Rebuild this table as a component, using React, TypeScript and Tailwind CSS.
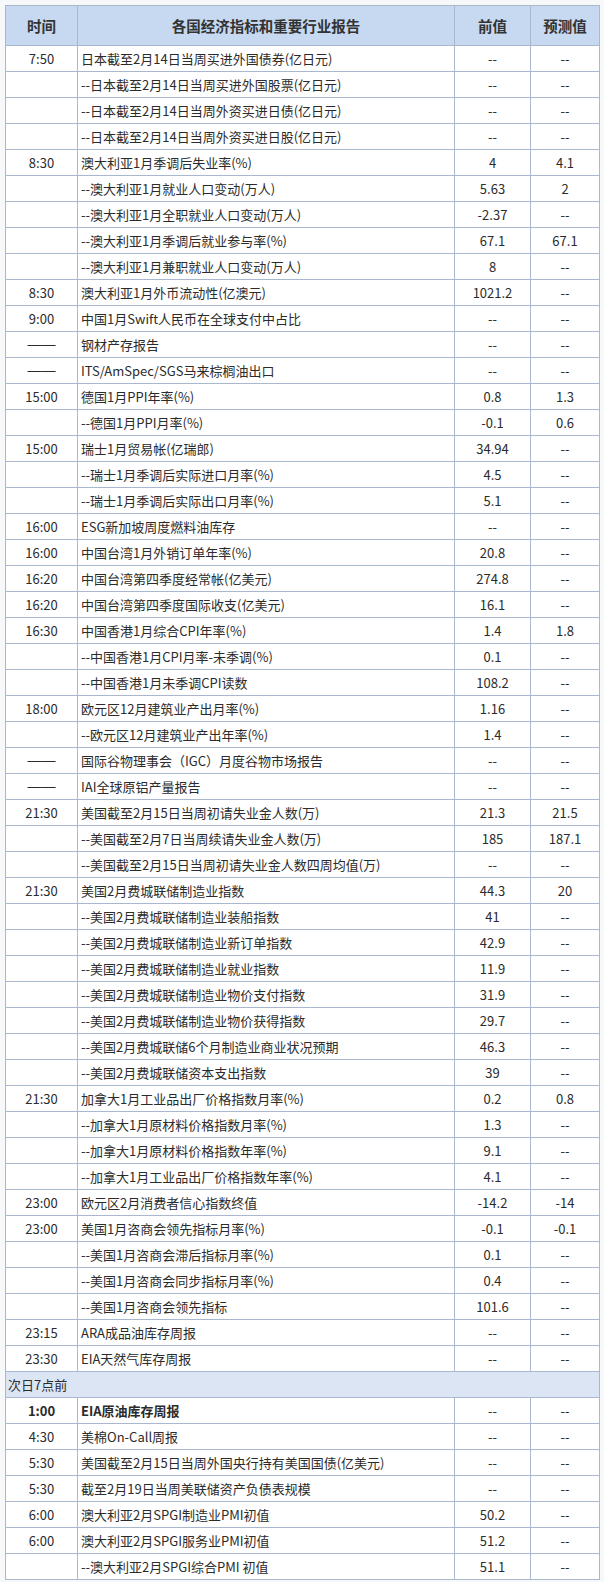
import React from "react";

type Row = { t?: string; n: string; p?: string; f?: string; bold?: boolean; section?: boolean };

const rows: Row[] = [
  { t: "7:50", n: "日本截至2月14日当周买进外国债券(亿日元)" },
  { n: "--日本截至2月14日当周买进外国股票(亿日元)" },
  { n: "--日本截至2月14日当周外资买进日债(亿日元)" },
  { n: "--日本截至2月14日当周外资买进日股(亿日元)" },
  { t: "8:30", n: "澳大利亚1月季调后失业率(%)", p: "4", f: "4.1" },
  { n: "--澳大利亚1月就业人口变动(万人)", p: "5.63", f: "2" },
  { n: "--澳大利亚1月全职就业人口变动(万人)", p: "-2.37" },
  { n: "--澳大利亚1月季调后就业参与率(%)", p: "67.1", f: "67.1" },
  { n: "--澳大利亚1月兼职就业人口变动(万人)", p: "8" },
  { t: "8:30", n: "澳大利亚1月外币流动性(亿澳元)", p: "1021.2" },
  { t: "9:00", n: "中国1月Swift人民币在全球支付中占比" },
  { t: "——", n: "钢材产存报告" },
  { t: "——", n: "ITS/AmSpec/SGS马来棕榈油出口" },
  { t: "15:00", n: "德国1月PPI年率(%)", p: "0.8", f: "1.3" },
  { n: "--德国1月PPI月率(%)", p: "-0.1", f: "0.6" },
  { t: "15:00", n: "瑞士1月贸易帐(亿瑞郎)", p: "34.94" },
  { n: "--瑞士1月季调后实际进口月率(%)", p: "4.5" },
  { n: "--瑞士1月季调后实际出口月率(%)", p: "5.1" },
  { t: "16:00", n: "ESG新加坡周度燃料油库存" },
  { t: "16:00", n: "中国台湾1月外销订单年率(%)", p: "20.8" },
  { t: "16:20", n: "中国台湾第四季度经常帐(亿美元)", p: "274.8" },
  { t: "16:20", n: "中国台湾第四季度国际收支(亿美元)", p: "16.1" },
  { t: "16:30", n: "中国香港1月综合CPI年率(%)", p: "1.4", f: "1.8" },
  { n: "--中国香港1月CPI月率-未季调(%)", p: "0.1" },
  { n: "--中国香港1月未季调CPI读数", p: "108.2" },
  { t: "18:00", n: "欧元区12月建筑业产出月率(%)", p: "1.16" },
  { n: "--欧元区12月建筑业产出年率(%)", p: "1.4" },
  { t: "——", n: "国际谷物理事会（IGC）月度谷物市场报告" },
  { t: "——", n: "IAI全球原铝产量报告" },
  { t: "21:30", n: "美国截至2月15日当周初请失业金人数(万)", p: "21.3", f: "21.5" },
  { n: "--美国截至2月7日当周续请失业金人数(万)", p: "185", f: "187.1" },
  { n: "--美国截至2月15日当周初请失业金人数四周均值(万)" },
  { t: "21:30", n: "美国2月费城联储制造业指数", p: "44.3", f: "20" },
  { n: "--美国2月费城联储制造业装船指数", p: "41" },
  { n: "--美国2月费城联储制造业新订单指数", p: "42.9" },
  { n: "--美国2月费城联储制造业就业指数", p: "11.9" },
  { n: "--美国2月费城联储制造业物价支付指数", p: "31.9" },
  { n: "--美国2月费城联储制造业物价获得指数", p: "29.7" },
  { n: "--美国2月费城联储6个月制造业商业状况预期", p: "46.3" },
  { n: "--美国2月费城联储资本支出指数", p: "39" },
  { t: "21:30", n: "加拿大1月工业品出厂价格指数月率(%)", p: "0.2", f: "0.8" },
  { n: "--加拿大1月原材料价格指数月率(%)", p: "1.3" },
  { n: "--加拿大1月原材料价格指数年率(%)", p: "9.1" },
  { n: "--加拿大1月工业品出厂价格指数年率(%)", p: "4.1" },
  { t: "23:00", n: "欧元区2月消费者信心指数终值", p: "-14.2", f: "-14" },
  { t: "23:00", n: "美国1月咨商会领先指标月率(%)", p: "-0.1", f: "-0.1" },
  { n: "--美国1月咨商会滞后指标月率(%)", p: "0.1" },
  { n: "--美国1月咨商会同步指标月率(%)", p: "0.4" },
  { n: "--美国1月咨商会领先指标", p: "101.6" },
  { t: "23:15", n: "ARA成品油库存周报" },
  { t: "23:30", n: "EIA天然气库存周报" },
  { n: "次日7点前", section: true },
  { t: "1:00", n: "EIA原油库存周报", bold: true },
  { t: "4:30", n: "美棉On-Call周报" },
  { t: "5:30", n: "美国截至2月15日当周外国央行持有美国国债(亿美元)" },
  { t: "5:30", n: "截至2月19日当周美联储资产负债表规模" },
  { t: "6:00", n: "澳大利亚2月SPGI制造业PMI初值", p: "50.2" },
  { t: "6:00", n: "澳大利亚2月SPGI服务业PMI初值", p: "51.2" },
  { n: "--澳大利亚2月SPGI综合PMI 初值", p: "51.1" },
];

const font = { fontFamily: '"Noto Sans CJK SC", "Noto Sans", sans-serif' };

export default function App() {
  return (
    <div className="min-h-[1582px] w-[604px] bg-[#f7f8fa] pt-[5px] pl-[5px]" style={font}>
      <div className="w-[595px] border-l border-t border-[#a9b8cf] bg-white text-[13px] text-[#2b2b2b]">
        <div className="flex h-[40px] border-b border-[#a9b8cf] bg-[#c6d9f1] text-[14.5px] font-bold text-[#333]">
          <div className="flex w-[72px] items-center justify-center border-r border-[#a9b8cf]">时间</div>
          <div className="flex w-[377px] items-center justify-center border-r border-[#a9b8cf]">各国经济指标和重要行业报告</div>
          <div className="flex w-[76px] items-center justify-center border-r border-[#a9b8cf]">前值</div>
          <div className="flex w-[69px] items-center justify-center border-r border-[#a9b8cf]">预测值</div>
        </div>
        {rows.map((r, i) =>
          r.section ? (
            <div key={i} className="flex h-[26px] items-center border-b border-r border-[#a9b8cf] bg-[#dbe5f4] pl-[2px]">
              {r.n}
            </div>
          ) : (
            <div key={i} className="flex h-[26px] border-b border-[#a9b8cf]">
              <div className={`flex w-[72px] items-center justify-center border-r border-[#a9b8cf] ${r.bold ? "font-bold" : ""}`}>
                {r.t === "——" ? (
                  <span className="text-[14px]" style={{ fontFamily: '"Liberation Sans", sans-serif' }}>——</span>
                ) : (
                  r.t ?? ""
                )}
              </div>
              <div className={`flex w-[377px] items-center overflow-hidden whitespace-nowrap border-r border-[#a9b8cf] pl-[3px] ${r.bold ? "font-bold" : ""}`}>{r.n}</div>
              <div className="flex w-[76px] items-center justify-center border-r border-[#a9b8cf]">{r.p ?? "--"}</div>
              <div className="flex w-[69px] items-center justify-center border-r border-[#a9b8cf]">{r.f ?? "--"}</div>
            </div>
          )
        )}
      </div>
    </div>
  );
}
